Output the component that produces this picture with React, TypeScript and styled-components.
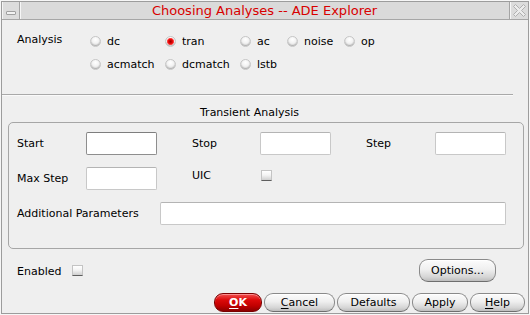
import React from "react";
import styled, { createGlobalStyle, css } from "styled-components";

const GlobalStyle = createGlobalStyle`
  html, body { margin: 0; padding: 0; background: #f6f6f6; }
  body { font-family: "DejaVu Sans", "Liberation Sans", sans-serif; }
  * { box-sizing: border-box; }
`;

const Window = styled.div`
  margin: 1px 0 0 1px;
  width: 528px;
  height: 313px;
  border: 1px solid #9c9c9c;
  background: #efefef;
  display: flex;
  flex-direction: column;
  font-family: "DejaVu Sans", "Liberation Sans", sans-serif;
  font-size: 11px;
  line-height: 13px;
  color: #000;
`;

const TitleBar = styled.div`
  height: 18px;
  flex: 0 0 18px;
  display: flex;
  align-items: stretch;
  background: #dadada;
  border-bottom: 1px solid #a6a6a6;
`;

const TitleButton = styled.div<{ $side: "left" | "right" }>`
  flex: 0 0 ${(p) => (p.$side === "left" ? "18px" : "19px")};
  display: flex;
  align-items: center;
  justify-content: center;
  background: #dcdcdc;
  ${(p) =>
    p.$side === "left"
      ? css`
          border-left: 1px solid #f4f4f4;
          border-right: 1px solid #a4a4a4;
          box-shadow: 1px 0 0 #f6f6f6;
        `
      : css`
          border-left: 1px solid #a4a4a4;
          box-shadow: inset 1px 0 0 #f6f6f6;
        `}
`;

const MinGlyph = styled.span`
  width: 10px;
  height: 4px;
  margin-top: 5px;
  border: 1px solid #a0a0a0;
  border-radius: 1px;
  background: #f2f2f2;
`;

const Title = styled.div`
  flex: 1;
  text-align: center;
  font-size: 13px;
  line-height: 17px;
  color: #d80000;
  white-space: nowrap;
`;

const Body = styled.div`
  flex: 1;
  display: flex;
  flex-direction: column;
`;

const AnalysisSection = styled.div`
  display: grid;
  grid-template-columns: 73px auto;
  padding: 10px 0 0 15px;
`;

const SectionLabel = styled.div`
  padding-top: 3px;
`;

const RadioGrid = styled.div`
  display: grid;
  grid-template-columns: 75px 75px 47px 57px auto;
  grid-auto-rows: 22px;
  row-gap: 1px;
`;

const RadioItem = styled.label`
  display: flex;
  align-items: center;
  gap: 6px;
  white-space: nowrap;
`;

const RadioDot = styled.span<{ $checked?: boolean }>`
  width: 11px;
  height: 11px;
  border-radius: 50%;
  border: 1px solid #c6c6c6;
  box-shadow: inset 0 -1px 1px rgba(0, 0, 0, 0.18);
  background: ${(p) =>
    p.$checked
      ? "radial-gradient(circle at 50% 50%, #9a0000 0, #c80000 1.2px, #ee1010 2.4px, #ff5050 3.2px, rgba(255,255,255,0.9) 3.9px, transparent 4.4px), radial-gradient(circle at 50% 30%, #ffffff 0%, #f2f2f2 45%, #c2c2c2 100%)"
      : "radial-gradient(circle at 50% 30%, #ffffff 0%, #f2f2f2 45%, #c2c2c2 100%)"};
`;

const Separator = styled.div`
  margin: 19px 15px 0 0;
  height: 2px;
  border-top: 1px solid #a9a9a9;
  border-bottom: 1px solid #fafafa;
`;

const GroupTitle = styled.div`
  margin-top: 10px;
  padding-left: 198px;
  height: 13px;
`;

const GroupBox = styled.div`
  margin: 3px 4px 0 6px;
  height: 127px;
  border: 1px solid #a6a6a6;
  border-radius: 5px;
  padding: 9px 16px 0 8px;
  display: flex;
  flex-direction: column;
  gap: 12px;
`;

const FieldRow = styled.div`
  display: flex;
  align-items: center;
  gap: 35px;
  height: 23px;
`;

const Field = styled.div<{ $top?: boolean }>`
  display: flex;
  align-items: center;
  ${(p) =>
    p.$top &&
    css`
      align-self: flex-start;
      margin-top: 2px;
    `}
`;

const FieldLabel = styled.span<{ $w: number }>`
  width: ${(p) => p.$w}px;
  white-space: nowrap;
`;

const TextInput = styled.div<{ $w?: number; $focus?: boolean }>`
  width: ${(p) => p.$w ?? 71}px;
  height: 23px;
  background: #ffffff;
  border: 1px solid ${(p) => (p.$focus ? "#8e8e8e" : "#c8c8c8")};
  border-top-color: ${(p) => (p.$focus ? "#7e7e7e" : "#b4b4b4")};
  border-radius: 2px;
`;

const CheckBox = styled.span`
  width: 11px;
  height: 11px;
  border: 1px solid #c4c4c4;
  border-bottom-color: #5e5e5e;
  background: linear-gradient(#ffffff 0%, #f4f4f4 45%, #cfcfcf 100%);
`;

const FooterRow = styled.div`
  margin: 10px 32px 0 15px;
  height: 23px;
  display: flex;
  align-items: center;
`;

const EnabledLabel = styled.span`
  margin-right: 11px;
  padding-top: 1px;
`;

const Spacer = styled.div`
  flex: 1;
`;

const Button = styled.button<{ $w: number; $h?: number; $primary?: boolean }>`
  width: ${(p) => p.$w}px;
  height: ${(p) => p.$h ?? 19}px;
  padding: 0;
  font-family: "DejaVu Sans", "Liberation Sans", sans-serif;
  font-size: 11px;
  line-height: 13px;
  border-radius: 9px;
  border: 1px solid #8a8a8a;
  border-bottom-color: #6e6e6e;
  color: #000;
  background: linear-gradient(#fcfcfc 0%, #efefef 45%, #d6d6d6 80%, #bdbdbd 100%);
  box-shadow: inset 0 1px 0 #ffffff;
  display: flex;
  align-items: center;
  justify-content: center;
  ${(p) =>
    p.$primary &&
    css`
      border-color: #7a0000;
      color: #ffffff;
      font-weight: bold;
      background: linear-gradient(#f25050 0%, #dc0a0a 35%, #c00000 70%, #8c0000 100%);
      box-shadow: inset 0 1px 0 rgba(255, 170, 170, 0.7);
    `}
`;

const Mnemonic = styled.span`
  text-decoration: underline;
  text-underline-offset: 2px;
`;

const ButtonRow = styled.div`
  margin: 11px 3px 0 0;
  display: flex;
  justify-content: flex-end;
  gap: 2px;
`;

const CloseIcon = () => (
  <svg width="13" height="13" viewBox="0 0 13 13">
    <polygon
      points="0.5,2.5 2.5,0.5 6.5,4.5 10.5,0.5 12.5,2.5 8.5,6.5 12.5,10.5 10.5,12.5 6.5,8.5 2.5,12.5 0.5,10.5 4.5,6.5"
      fill="#ececec"
      stroke="#b0b0b0"
      strokeWidth="1"
      strokeLinejoin="round"
    />
  </svg>
);

const radios: { label: string; checked?: boolean }[][] = [
  [{ label: "dc" }, { label: "tran", checked: true }, { label: "ac" }, { label: "noise" }, { label: "op" }],
  [{ label: "acmatch" }, { label: "dcmatch" }, { label: "lstb" }],
];

export default function App() {
  return (
    <>
      <GlobalStyle />
      <Window>
        <TitleBar>
          <TitleButton $side="left">
            <MinGlyph />
          </TitleButton>
          <Title>Choosing Analyses -- ADE Explorer</Title>
          <TitleButton $side="right">
            <CloseIcon />
          </TitleButton>
        </TitleBar>
        <Body>
          <AnalysisSection>
            <SectionLabel>Analysis</SectionLabel>
            <RadioGrid>
              {radios.map((row, ri) =>
                row.map((r) => (
                  <RadioItem key={`${ri}-${r.label}`}>
                    <RadioDot $checked={r.checked} />
                    {r.label}
                  </RadioItem>
                ))
              )}
            </RadioGrid>
          </AnalysisSection>
          <Separator />
          <GroupTitle>Transient Analysis</GroupTitle>
          <GroupBox>
            <FieldRow>
              <Field>
                <FieldLabel $w={69}>Start</FieldLabel>
                <TextInput $focus />
              </Field>
              <Field>
                <FieldLabel $w={68}>Stop</FieldLabel>
                <TextInput />
              </Field>
              <Field>
                <FieldLabel $w={69}>Step</FieldLabel>
                <TextInput />
              </Field>
            </FieldRow>
            <FieldRow>
              <Field>
                <FieldLabel $w={69}>Max Step</FieldLabel>
                <TextInput />
              </Field>
              <Field $top>
                <FieldLabel $w={69}>UIC</FieldLabel>
                <CheckBox />
              </Field>
            </FieldRow>
            <FieldRow>
              <Field>
                <FieldLabel $w={143}>Additional Parameters</FieldLabel>
                <TextInput $w={346} />
              </Field>
            </FieldRow>
          </GroupBox>
          <FooterRow>
            <EnabledLabel>Enabled</EnabledLabel>
            <CheckBox />
            <Spacer />
            <Button $w={77} $h={23}>Options...</Button>
          </FooterRow>
          <ButtonRow>
            <Button $w={48} $primary>
              <Mnemonic>O</Mnemonic>K
            </Button>
            <Button $w={71}>
              <Mnemonic>C</Mnemonic>ancel
            </Button>
            <Button $w={73}>Defaults</Button>
            <Button $w={56}>Apply</Button>
            <Button $w={55}>
              <Mnemonic>H</Mnemonic>elp
            </Button>
          </ButtonRow>
        </Body>
      </Window>
    </>
  );
}
